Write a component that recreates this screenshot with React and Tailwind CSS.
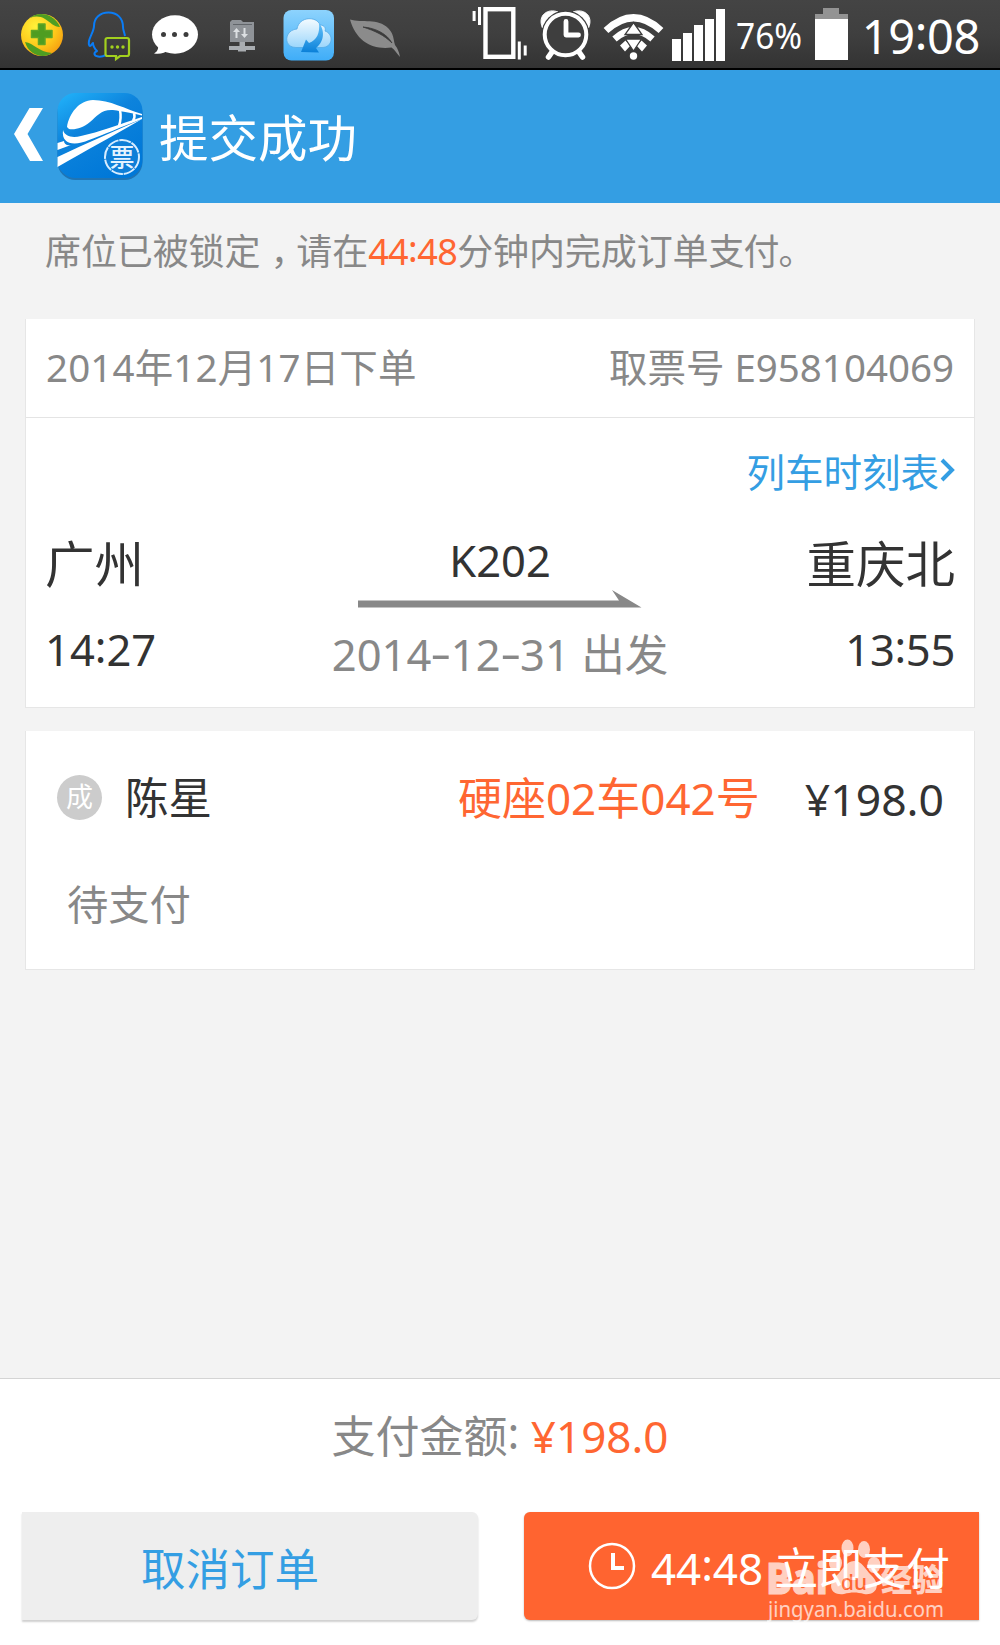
import React from 'react';

const NoticeBarIcons = () => <div className="flex items-center h-full">
    {/* 360 */}
    <svg className="ml-5 w-11 h-[68px]" viewBox="20 0 44 68">
      <defs>
        <radialGradient id="ball" cx="0.35" cy="0.3" r="0.8">
          <stop offset="0" stopColor="#fff23a" />
          <stop offset="0.6" stopColor="#fdc81a" />
          <stop offset="1" stopColor="#f59a10" />
        </radialGradient>
      </defs>
      <circle cx="42" cy="35" r="21" fill="url(#ball)" />
      <path d="M30 18 C38 11 54 13 60 27 C54 27 50 22 45 19 C40 16 35 16 30 18Z" fill="#4e9e22" />
      <path d="M25 42 C34 43 38 52 52 53 C44 59 29 56 25 42Z" fill="#4e9e22" />
      <path d="M38.500 24 h6.500 v6.500 h7 v7 h-7 v7 h-6.500 v-7 h-7 v-7 h7z" fill="#4f9d21" stroke="#5fa526" strokeWidth="1.500" strokeLinejoin="round" />
    </svg>
    {/* QQ */}
    <svg className="ml-[22px] w-[46px] h-[68px]" viewBox="86 0 46 68" fill="none">
      <path d="M125 36 C124 31 123 30 123 27 C123 18 117 12.500 108.500 12.500 C100 12.500 94 18 94 26 C94 31 90 36 89 41 C88.500 44 89 46 90 46 C91 46 92 44 93 43 C93 47 95 49 97 51 C93 53 94 56 98 56.500 C101 57 104 56 106 55" stroke="#0a7cf5" strokeWidth="2" strokeLinejoin="round" />
      <path d="M107.500 38 h19.500 a2 2 0 0 1 2 2 v14 a2 2 0 0 1 -2 2 h-7 l-4 3 v-3 h-8.500 a2 2 0 0 1 -2 -2 v-14 a2 2 0 0 1 2 -2z" stroke="#a2d01e" strokeWidth="2.200" />
      <circle cx="112" cy="47" r="1.700" fill="#a2d01e" />
      <circle cx="117.500" cy="47" r="1.700" fill="#a2d01e" />
      <circle cx="123" cy="47" r="1.700" fill="#a2d01e" />
    </svg>
    {/* 短信 */}
    <svg className="ml-[18px] w-[50px] h-[68px]" viewBox="150 0 50 68">
      <ellipse cx="175" cy="34.500" rx="23" ry="19.200" fill="#fff" />
      <path d="M158 44 C159 49 157 52 154 53.500 C160 54.500 165 53 169 50z" fill="#fff" />
      <circle cx="163.500" cy="34.500" r="2.500" fill="#3c3c3c" />
      <circle cx="174.500" cy="34.500" r="2.500" fill="#3c3c3c" />
      <circle cx="186" cy="34.500" r="2.500" fill="#3c3c3c" />
    </svg>
    {/* 文件传输 */}
    <svg className="ml-[28px] w-[30px] h-[68px]" viewBox="228 0 30 68">
      <path d="M230 22 l2 -2 h9 l2 2 h11 v20 h-24z" fill="#8f9398" />
      <path d="M233 24.500 h19" stroke="#62666b" strokeWidth="1" />
      <path d="M236.500 38 v-7 M244.500 28 v7" stroke="#dcdfe2" strokeWidth="2" />
      <path d="M233 32 l3.500 -4 l3.500 4z M241 34 l3.500 4 l3.500 -4z" fill="#dcdfe2" />
      <path d="M239.500 42 h5.500 v4 h10 v4 h-9 v1.500 h-8 v-1.500 h-9 v-4 h10.500z" fill="#a9adb1" />
    </svg>
    {/* 云盘 */}
    <svg className="ml-[24px] w-[54px] h-[68px]" viewBox="282 0 54 68">
      <defs>
        <linearGradient id="cloudBg" x1="0" y1="0" x2="0" y2="1">
          <stop offset="0" stopColor="#8dd3fd" />
          <stop offset="1" stopColor="#3fadf8" />
        </linearGradient>
        <linearGradient id="cloud" x1="0" y1="0" x2="0" y2="1">
          <stop offset="0" stopColor="#f4fbff" />
          <stop offset="1" stopColor="#9cd6fb" />
        </linearGradient>
        <linearGradient id="cloudArrow" x1="0" y1="0" x2="0" y2="1">
          <stop offset="0" stopColor="#63c1fa" />
          <stop offset="1" stopColor="#0a80d8" />
        </linearGradient>
      </defs>
      <rect x="283.500" y="10" width="50.500" height="50.500" rx="8" fill="url(#cloudBg)" />
      <path d="M296 47.500 C283 47.500 284 30 297 29 C299 16 317 16 320 25 C325 25 326 29 325 31 C334 34 333 47.500 322 47.500Z" fill="url(#cloud)" stroke="#55abe6" strokeWidth="0.800" />
      <path d="M319 23 C326 32 323 43 316 48 L319 52.500 L301 52 L306 39.500 L309 43 C317 40 320 33 319 23Z" fill="url(#cloudArrow)" />
    </svg>
    {/* 叶子 */}
    <svg className="ml-[13px] w-[52px] h-[68px]" viewBox="349 0 52 68">
      <path d="M350 19.500 C362 23 378 18 388 28 C394 34 393 38 395 45 C398 49 399 52 400 57 C397 54 395 50 391.500 47.500 C372 50 356 41 350 19.500Z" fill="#8b8b8b" />
      <path d="M363 27 C376 28 387 34 392 43 C384 35 375 31 363 27Z" fill="#3b3b3b" stroke="#3b3b3b" strokeWidth="0.800" />
    </svg>
  </div>;

const SystemIcons = () => <div className="flex items-center h-full text-white">
    {/* 振动 */}
    <svg className="shrink-0 w-[58px] h-[68px]" viewBox="470 0 58 68" fill="#fff">
      <rect x="485.500" y="9.200" width="27.800" height="47.600" fill="none" stroke="#fff" strokeWidth="4.400" />
      <path d="M472.600 11 h3 v10 h-3z M478 7 h3 v18 h-3z M517.800 41.500 h3 v18 h-3z M523.700 45.500 h3 v10 h-3z" />
    </svg>
    {/* 闹钟 */}
    <svg className="shrink-0 ml-[10px] w-14 h-[68px]" viewBox="538 0 56 68" fill="none" stroke="#fff">
      <path d="M542.500 28 C537 15 548 8 558 12z M588.500 28 C594 15 583 8 573 12z" fill="#fff" strokeWidth="1" />
      <circle cx="565.500" cy="34.500" r="24" fill="#3e3e3e" stroke="none" />
      <circle cx="565.500" cy="34.500" r="20.800" strokeWidth="4" />
      <path d="M552 52 l-3.500 5 M579 52 l3.500 5" strokeWidth="5.500" strokeLinecap="round" />
      <path d="M566 21.500 v13.500 h12.500" strokeWidth="4.800" strokeLinecap="round" strokeLinejoin="round" />
    </svg>
    {/* WiFi */}
    <svg className="shrink-0 ml-[8px] w-16 h-[68px]" viewBox="602 0 64 68" fill="none" stroke="#fff">
      <path d="M606 30.500 Q633.500 5 661 30.500" strokeWidth="7" />
      <path d="M614.500 39 Q633.500 22 652.500 39" strokeWidth="6.500" />
      <path d="M620 45.500 l5.500 -5 l5 5 l-5.500 6z M647 45.500 l-5.500 -5 l-5 5 l5.500 6z" fill="#fff" stroke="none" />
      <path d="M633.500 22.500 l8.500 12 h-17z M633.500 51 l8 -12 h-16z" fill="#fff" stroke="#3c3c3c" strokeWidth="1.300" />
      <circle cx="633.500" cy="56" r="3.700" fill="#fff" stroke="none" />
    </svg>
    {/* 信号 */}
    <div className="shrink-0 ml-[6px] flex items-end gap-[2.2px] h-[68px] pb-[7.5px]">
      <i className="w-[8.8px] h-[21.5px] bg-white" />
      <i className="w-[8.8px] h-[28px] bg-white" />
      <i className="w-[8.8px] h-[35.5px] bg-white" />
      <i className="w-[8.8px] h-[42px] bg-white" />
      <i className="w-[8.8px] h-[52px] bg-white" />
    </div>
    <span className="shrink-0 ml-[11px] mt-1 w-[68px] text-[36px] leading-[60px] origin-left scale-x-[0.93] whitespace-nowrap">76%</span>
    {/* 电池 */}
    <div className="shrink-0 ml-[11px] flex flex-col items-center w-[33px]">
      <i className="w-[15.5px] h-[6px] bg-[#939393]" />
      <i className="w-full h-[5px] bg-[#939393]" />
      <i className="w-full h-[41px] bg-white" />
    </div>
    <span className="shrink-0 ml-[14px] mt-1 w-[120px] text-[47px] leading-[64px] tracking-[-0.4px] whitespace-nowrap">19<Colon />08</span>
  </div>;

const TrainLogo = () => <svg className="w-[90px] h-[90px]" viewBox="0 0 90 90">
    <defs>
      <linearGradient id="logoBg" x1="0" y1="0" x2="0.6" y2="1">
        <stop offset="0" stopColor="#22b4fb" />
        <stop offset="0.45" stopColor="#0d83dc" />
        <stop offset="1" stopColor="#0078d8" />
      </linearGradient>
    </defs>
    <rect x="2.500" y="3" width="85" height="85" rx="18" fill="#1f74b4" />
    <rect x="2.500" y="1" width="85" height="85" rx="18" fill="url(#logoBg)" />
    <path d="M12 35 C14 22 24 8 38 8 C55 8 70 17 87 22 L87 23.500 C78 21 70 20 64 19 C48 15 43 23 35 30 C28 36 20 38 14 37Z" fill="#fff" />
    <path d="M8 38 C10 45 18 46 26 44 C45 40 62 33 87 25 L87 27 C66 35 48 43 34 48 C20 54 6 53 8 38Z" fill="#fff" />
    <path d="M2.500 51 L9 49 C9 52 12 54 16 53 L2.500 58Z" fill="#fff" />
    <path d="M2.500 65 C32 51 60 39 87 27 C58 44 32 58 2.500 75Z" fill="#fff" />
    <path d="M65 18 C66 23 66 28 64 34 M79 21 C80 24 80 26 78 29" fill="none" stroke="#fff" strokeWidth="2.500" />
    <circle cx="67" cy="65" r="17" fill="#0f7fd8" stroke="#d8edff" strokeWidth="2" strokeDasharray="12 0.8" />
    <text x="67" y="74.500" textAnchor="middle" fontSize="25" fontWeight="500" fill="#e4f3ff">票</text>
  </svg>;

// 冒号在数字中间垂直居中
const Colon = () => <span className="relative -top-[0.08em]">:</span>;

const Dash = () => <span className="inline-block w-[19.5px] text-center scale-x-150 relative -top-[2px]">-</span>;

const Watermark = () => <div className="absolute left-[243px] top-[24px] w-[184px] h-[92px] opacity-70">
    <svg className="w-full h-full" viewBox="0 0 184 92" fill="#fff">
      <text x="-1" y="58" fontSize="42" fontWeight="800" textLength="62" lengthAdjust="spacingAndGlyphs" stroke="#fff" strokeWidth="1">Bai</text>
      <ellipse cx="80.500" cy="12" rx="6" ry="8.500" />
      <ellipse cx="97" cy="13.500" rx="6" ry="8.500" />
      <ellipse cx="68.500" cy="27" rx="6.500" ry="8" />
      <ellipse cx="107" cy="29" rx="6.500" ry="8" />
      <path d="M87 25 C95 25 98 33 104 39 C115 49 109 60 97 58 C90 56 84 56 77 58 C64 60 60 49 69 40 C76 34 79 25 87 25Z" />
      <text x="74" y="54" fontSize="21" fontWeight="500" fill="#ff6430" textLength="26" lengthAdjust="spacingAndGlyphs">du</text>
      <text x="114" y="55" fontSize="31" fontWeight="900">经验</text>
      <text x="1" y="81" fontSize="22" textLength="176" lengthAdjust="spacingAndGlyphs">jingyan.baidu.com</text>
    </svg>
  </div>;

export default function App() {
  return <div className="flex flex-col w-[1000px] h-[1645px] overflow-hidden bg-[#f3f3f3] font-['Noto_Sans','Noto_Sans_CJK_SC',sans-serif] text-[#333]">
      {/* 状态栏 */}
      <div className="flex justify-between h-[70px] shrink-0 border-b-2 border-black bg-linear-to-b from-[#444] via-[#3f3f3f] to-[#333]">
        <NoticeBarIcons />
        <div className="w-[530px]"><SystemIcons /></div>
      </div>

      {/* 标题栏 */}
      <header className="flex items-center h-[133px] shrink-0 bg-[#349ee3] text-white">
        <svg className="ml-3 mb-1.5 w-8 h-[54px]" viewBox="12 106 32 54">
          <path d="M14 133 L29.500 107 H43 L27.500 133 L43 160 H30z" fill="#fff" />
        </svg>
        <div className="ml-[11px]"><TrainLogo /></div>
        <h1 className="ml-[14px] mt-0.5 text-[49.5px] leading-[60px]">提交成功</h1>
      </header>

      <p className="h-[97px] shrink-0 pl-[45px] text-[36px] leading-[97px] tracking-[-0.1px] text-[#888] whitespace-nowrap">
        席位已被锁定<span className="relative left-[10px]">，</span>请在<span className="text-[#ff6632] tracking-[-0.6px]">44<Colon />48</span>分钟内完成订单<span className="tracking-[-1px]">支付。</span>
      </p>

      {/* 订单信息 */}
      <section className="mx-[25px] mt-[19px] h-[389px] shrink-0 bg-white border-x border-b border-[#e6e6e6]">
        <div className="flex justify-between h-[99px] px-5 border-b border-[#e4e4e4] text-[38.5px] leading-[97px] text-[#888]">
          <span className="tracking-[0.15px]">2014年12月17日下单</span>
          <span>取票号 E958104069</span>
        </div>
        <div className="px-[19px]">
          <a className="flex justify-end items-center mt-[30px] h-12 text-[38.5px] leading-[48px] text-[#349ee3]">
            列车时刻表
            <svg className="ml-[1px] mb-1 w-[15px] h-6" viewBox="0 0 15 24" fill="none" stroke="#349ee3" strokeWidth="4">
              <path d="M2 2 L12 12 L2 22" />
            </svg>
          </a>
          <div className="grid grid-cols-[200px_1fr_200px]">
            <div className="pt-[38px]">
              <div className="text-[49.5px] leading-[60px]">广州</div>
              <div className="mt-[25px] text-[43.5px] leading-[60px]">14<Colon />27</div>
            </div>
            <div className="flex flex-col items-center pt-[34px]">
              <div className="text-[43.5px] leading-[60px]">K202</div>
              <svg className="w-[284px] h-[18px]" viewBox="0 0 284 18" fill="#888">
                <path d="M0 10.500 H261 L254 0 L283.500 17.500 H0z" />
              </svg>
              <div className="mt-[16px] text-[43.5px] leading-[60px] text-[#888] whitespace-nowrap">2014<Dash />12<Dash />31 出发</div>
            </div>
            <div className="pt-[38px] text-right">
              <div className="text-[49.5px] leading-[60px]">重庆北</div>
              <div className="mt-[25px] text-[43.5px] leading-[60px] tracking-[-0.3px]">13<Colon />55</div>
            </div>
          </div>
        </div>
      </section>

      {/* 乘客信息 */}
      <section className="mx-[25px] mt-[23px] h-[239px] shrink-0 bg-white border-x border-b border-[#e6e6e6]">
        <div className="flex items-center h-[132px] pl-[31px] pr-[30px] text-[44px]">
          <span className="w-[45px] h-[45px] rounded-full bg-[#ccc] text-center text-[27px] leading-[44px] text-white">成</span>
          <span className="ml-[23px] mt-0.5 text-[43.5px]">陈星</span>
          <span className="ml-auto mt-0.5">
            <span className="text-[#ff6632]">硬座02车042号</span>
          </span>
          <span className="ml-[45px] mt-1 text-[44.5px]">¥198.0</span>
        </div>
        <div className="pl-[41px] text-[41.3px] leading-[82px] text-[#888]">待支付</div>
      </section>

      {/* 底部支付栏 */}
      <footer className="mt-auto h-[267px] shrink-0 bg-white border-t border-[#d4d4d4]">
        <div className="h-[114px] text-center text-[44px] leading-[114px] text-[#888]">
          支付金额<Colon /> <span className="text-[#ff6632]">¥198.0</span>
        </div>
        <div className="flex justify-between mt-[19px] pl-[22px] pr-[21px]">
          <button className="w-[456px] h-[108px] pr-[40px] pt-1.5 rounded-r-md bg-[#eee] text-[44.5px] text-[#349ee3] shadow-[0_2px_2px_#d0d0d0]">取消订单</button>
          <button className="relative flex items-center w-[455px] h-[108px] pl-[64px] rounded-l-md bg-[#ff6430] text-[44px] text-white shadow-[0_1px_2px_#bbb] whitespace-nowrap">
            <svg className="w-12 h-12" viewBox="0 0 48 48" fill="none" stroke="#fff">
              <circle cx="24" cy="24" r="22" strokeWidth="2.500" />
              <path d="M25 11 V26 H36" strokeWidth="4" />
            </svg>
            <span className="ml-[15px] mt-1 tracking-[-0.1px]">44<Colon />48 立即支付</span>
            <Watermark />
          </button>
        </div>
      </footer>
    </div>;
}
